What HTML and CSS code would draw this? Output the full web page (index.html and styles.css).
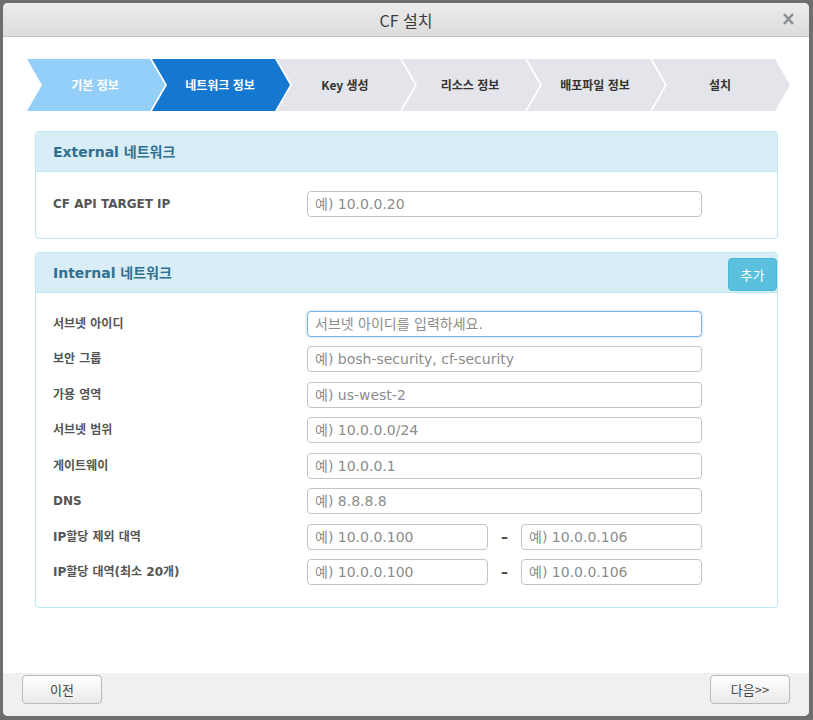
FILE: index.html
```html
<!DOCTYPE html>
<html lang="ko">
<head>
<meta charset="utf-8">
<title>CF 설치</title>
<link rel="stylesheet" href="styles.css">
</head>
<body>
<div class="dialog">
  <div class="titlebar">
    <span class="title">CF 설치</span>
    <button class="close" type="button" aria-label="닫기">
      <svg width="11" height="12" viewBox="0 0 11 12"><path d="M1 1 L10 11 M10 1 L1 11" stroke="#8b9095" stroke-width="2.6" stroke-linecap="butt" fill="none"/></svg>
    </button>
  </div>
  <div class="content">
    <ol class="wizard">
      <li class="step done">기본 정보</li>
      <li class="step active">네트워크 정보</li>
      <li class="step">Key 생성</li>
      <li class="step">리소스 정보</li>
      <li class="step">배포파일 정보</li>
      <li class="step">설치</li>
    </ol>

    <section class="panel panel-ext">
      <div class="panel-head"><h3>External 네트워크</h3></div>
      <div class="panel-body">
        <div class="form">
          <label class="lbl">CF API TARGET IP</label>
          <input class="inp" type="text" placeholder="예) 10.0.0.20">
        </div>
      </div>
    </section>

    <section class="panel panel-int">
      <div class="panel-head"><h3>Internal 네트워크</h3><button class="btn-add" type="button">추가</button></div>
      <div class="panel-body">
        <div class="form">
          <label class="lbl">서브넷 아이디</label>
          <input class="inp focus" type="text" placeholder="서브넷 아이디를 입력하세요.">
          <label class="lbl">보안 그룹</label>
          <input class="inp" type="text" placeholder="예) bosh-security, cf-security">
          <label class="lbl">가용 영역</label>
          <input class="inp" type="text" placeholder="예) us-west-2">
          <label class="lbl">서브넷 범위</label>
          <input class="inp" type="text" placeholder="예) 10.0.0.0/24">
          <label class="lbl">게이트웨이</label>
          <input class="inp" type="text" placeholder="예) 10.0.0.1">
          <label class="lbl">DNS</label>
          <input class="inp" type="text" placeholder="예) 8.8.8.8">
          <label class="lbl">IP할당 제외 대역</label>
          <div class="range">
            <input class="inp" type="text" placeholder="예) 10.0.0.100">
            <span class="dash">–</span>
            <input class="inp" type="text" placeholder="예) 10.0.0.106">
          </div>
          <label class="lbl">IP할당 대역(최소 20개)</label>
          <div class="range">
            <input class="inp" type="text" placeholder="예) 10.0.0.100">
            <span class="dash">–</span>
            <input class="inp" type="text" placeholder="예) 10.0.0.106">
          </div>
        </div>
      </div>
    </section>
  </div>
  <div class="footer">
    <button class="btn" type="button">이전</button>
    <button class="btn" type="button">다음&gt;&gt;</button>
  </div>
</div>
</body>
</html>
```
FILE: styles.css
```css
* { box-sizing: border-box; }
html, body { margin: 0; padding: 0; }
body {
  background: #6e6e6e;
  font-family: "DejaVu Sans", "Noto Sans CJK KR", sans-serif;
  color: #333;
  padding: 3px 4px 0 3px;
}
.dialog {
  width: 806px;
  height: 713px;
  background: #fff;
  border-radius: 5px;
  display: flex;
  flex-direction: column;
  overflow: hidden;
}
.titlebar {
  height: 34px;
  flex: none;
  background: linear-gradient(#ececec, #dcdcdc);
  border-bottom: 1px solid #c2c2c2;
  display: flex;
  align-items: center;
  justify-content: center;
  position: relative;
}
.title {
  font-family: "Noto Sans CJK KR", sans-serif;
  font-size: 16px;
  color: #3a3a3a;
  line-height: 20px;
}
.close {
  position: absolute;
  right: 15px;
  top: 10px;
  border: 0;
  background: none;
  padding: 0;
  width: 11px;
  height: 12px;
  display: block;
}
.close svg { display: block; }
.content {
  flex: 1;
  padding: 22px 31px 0 32px;
}
.wizard {
  list-style: none;
  margin: 0 0 20px -8px;
  padding: 0;
  display: flex;
  height: 52px;
}
.step {
  width: 140px;
  height: 52px;
  margin-right: -15px;
  flex: none;
  background: #e3e5ea;
  clip-path: polygon(0 0, 123px 0, 138px 50%, 123px 100%, 0 100%, 15px 50%);
  font-family: "Noto Sans CJK KR", sans-serif;
  font-weight: bold;
  font-size: 12px;
  line-height: 52px;
  color: #333;
  text-align: center;
  padding: 0 19px 0 15px;
}
.step.done { background: #93cff9; color: #fff; }
.step.active { background: #1478d0; color: #fff; }

.panel {
  border: 1px solid #bce8f1;
  border-radius: 4px;
  background: #fff;
  width: 743px;
}
.panel-ext { margin-bottom: 13px; }
.panel-head {
  height: 40px;
  background: #d9edf7;
  border-bottom: 1px solid #bce8f1;
  border-radius: 3px 3px 0 0;
  display: flex;
  align-items: center;
  justify-content: space-between;
  padding: 0 0 0 17px;
}
.panel-head h3 {
  margin: 0;
  font-size: 14px;
  font-weight: bold;
  color: #31708f;
  line-height: 18px;
}
.btn-add {
  width: 49px;
  height: 33px;
  margin-top: 3px;
  background: #5bc0de;
  border: 1px solid #46b8da;
  border-radius: 4px;
  color: #fff;
  font-family: "Noto Sans CJK KR", sans-serif;
  font-size: 13px;
  padding: 0;
}
.panel-body { padding: 19px 17px 21px; }
.panel-int .panel-body { padding: 18px 17px 22px; }
.form {
  display: grid;
  grid-template-columns: 254px 395px;
  row-gap: 9.43px;
  align-items: center;
}
.lbl {
  font-size: 12px;
  font-weight: bold;
  color: #555;
  line-height: 16px;
}
.inp {
  height: 26px;
  width: 100%;
  border: 1px solid #c4c4c4;
  border-radius: 4px;
  padding: 0 7px;
  font-family: "DejaVu Sans", "Noto Sans CJK KR", sans-serif;
  font-size: 14px;
  color: #555;
  background: #fff;
  outline: none;
}
.inp::placeholder { color: #8c8c8c; opacity: 1; }
.inp.focus {
  border-color: #7fb2e5;
  box-shadow: 0 0 3px rgba(102, 175, 233, 0.6);
}
.range {
  display: flex;
  align-items: center;
}
.range .inp { width: 181px; flex: none; }
.dash {
  width: 33px;
  text-align: center;
  font-weight: bold;
  font-size: 14px;
  color: #444;
}
.footer {
  height: 43px;
  flex: none;
  background: #f0f0f0;
  display: flex;
  justify-content: space-between;
  align-items: flex-start;
  padding: 2px 19px 0 19px;
}
.btn {
  width: 80px;
  height: 29px;
  border: 1px solid #b9b9b9;
  border-radius: 4px;
  background: linear-gradient(#ffffff, #e9e9e9);
  font-family: "Noto Sans CJK KR", sans-serif;
  font-size: 13px;
  color: #444;
  padding: 0;
}
```
